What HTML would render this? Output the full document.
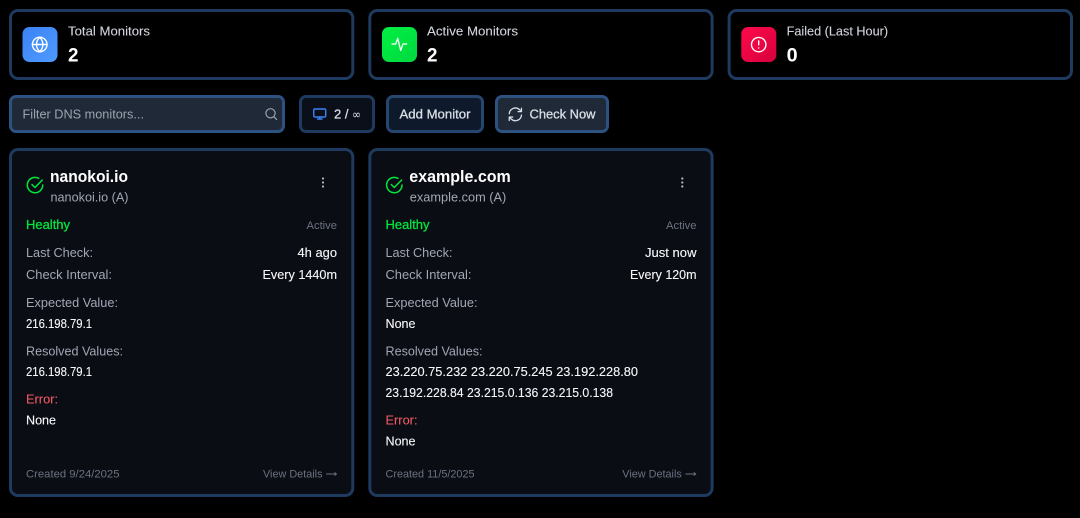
<!DOCTYPE html>
<html lang="en"><head><meta charset="utf-8"><title>DNS Monitors</title>
<style>
html,body{margin:0;padding:0;background:#000;width:1080px;height:518px;overflow:hidden}
svg{display:block}
text{font-family:"Liberation Sans",sans-serif}
.i{fill:none;stroke-linecap:round;stroke-linejoin:round}
.l{font-size:13px;fill:#a1a7b3}
.v{font-size:13px;fill:#f6f7f9;stroke:#f6f7f9;stroke-width:.12px}
.s{font-size:11px;fill:#6b7280}
.h{font-size:16.5px;font-weight:700;fill:#fff}
.n{font-size:19.5px;font-weight:700;fill:#fff}
.t{font-size:13px;fill:#d1d5db;stroke:#d1d5db;stroke-width:.1px}
.b{font-size:13px;fill:#d8dde5;stroke:#d8dde5;stroke-width:.3px}
.g{font-size:13px;fill:#00e63c;stroke:#00e63c;stroke-width:.3px}
.e{font-size:13px;fill:#f05a64;stroke:#f05a64;stroke-width:.1px}
</style></head><body>
<svg width="1080" height="518" viewBox="0 0 1080 518" xmlns="http://www.w3.org/2000/svg">
<defs>
<linearGradient id="gb" x1="0" y1="0" x2="1" y2="1"><stop offset="0" stop-color="#3b82f6"/><stop offset="1" stop-color="#4f9bff"/></linearGradient>
<linearGradient id="gg" x1="0" y1="0" x2="1" y2="1"><stop offset="0" stop-color="#00f044"/><stop offset="1" stop-color="#00d93e"/></linearGradient>
<linearGradient id="gr" x1="0" y1="0" x2="1" y2="1"><stop offset="0" stop-color="#ff0a4a"/><stop offset="1" stop-color="#d6003c"/></linearGradient>
</defs>
<rect width="1080" height="518" fill="#000"/>

<!-- stat cards -->
<rect x="10.5" y="10.5" width="342.3" height="68" rx="7.5" fill="#000" stroke="#1e3a5f" stroke-width="3"/>
<rect x="369.8" y="10.5" width="342.3" height="68" rx="7.5" fill="#000" stroke="#1e3a5f" stroke-width="3"/>
<rect x="729.1" y="10.5" width="342.4" height="68" rx="7.5" fill="#000" stroke="#1e3a5f" stroke-width="3"/>

<rect x="22.5" y="27" width="35" height="35" rx="7" fill="url(#gb)"/>
<g class="i" stroke="#fff" stroke-width="1.4">
<circle cx="39.7" cy="44.5" r="7.3"/>
<path d="M32.4 44.5h14.6M39.7 37.2c-4.3 4.3-4.3 10.3 0 14.6M39.7 37.2c4.3 4.3 4.3 10.3 0 14.6"/>
</g>
<text class="t" x="68" y="35.5" textLength="82" lengthAdjust="spacingAndGlyphs">Total Monitors</text>
<text class="n" x="68" y="61.5" textLength="10.5" lengthAdjust="spacingAndGlyphs">2</text>

<rect x="382" y="27" width="35" height="35" rx="7" fill="url(#gg)"/>
<path class="i" stroke="#fff" stroke-width="1.3" d="M392 44h3.7l2-5.7 3 12.2 2.3-6.5h3.7"/>
<text class="t" x="427" y="35.5" textLength="91" lengthAdjust="spacingAndGlyphs">Active Monitors</text>
<text class="n" x="427" y="61.5" textLength="10.5" lengthAdjust="spacingAndGlyphs">2</text>

<rect x="741.3" y="27" width="35" height="35" rx="7" fill="url(#gr)"/>
<g class="i" stroke="#fff" stroke-width="1.4"><circle cx="758.7" cy="44.6" r="7.2"/><path d="M758.7 41v3.8M758.7 48h.01"/></g>
<text class="t" x="786.6" y="35.5" textLength="101.5" lengthAdjust="spacingAndGlyphs">Failed (Last Hour)</text>
<text class="n" x="786.6" y="61.5" textLength="11" lengthAdjust="spacingAndGlyphs">0</text>

<!-- toolbar -->
<rect x="10.5" y="96.5" width="273" height="35" rx="5.5" fill="#1f2937" stroke="#2c5282" stroke-width="3"/>
<text x="22.5" y="118.5" font-size="13" fill="#9ca3af" textLength="121.5" lengthAdjust="spacingAndGlyphs">Filter DNS monitors...</text>
<g class="i" stroke="#9ca3af" stroke-width="1.2"><circle cx="270.5" cy="113.3" r="4.6"/><path d="M274 116.8l2.6 2.6"/></g>

<rect x="300.5" y="96.5" width="73" height="35" rx="5.5" fill="#0a0f1a" stroke="#1e3a5f" stroke-width="3"/>
<g class="i" stroke="#3b82f6" stroke-width="1.4"><rect x="313.7" y="109" width="12" height="8" rx="1.2"/><path d="M317.5 119h4.5M319.7 117v2"/></g>
<text class="b" x="334" y="118.5">2 /</text>
<text x="352" y="118.5" font-size="12" fill="#d8dde5" style="font-family:'DejaVu Sans',sans-serif" textLength="9" lengthAdjust="spacingAndGlyphs">∞</text>

<rect x="387.5" y="96.5" width="95" height="35" rx="5.5" fill="#0e1a2b" stroke="#25466f" stroke-width="3"/>
<text class="b" x="399.5" y="118.5" textLength="71" lengthAdjust="spacingAndGlyphs">Add Monitor</text>

<rect x="496.5" y="96.5" width="111" height="35" rx="5.5" fill="#1f2937" stroke="#2c5282" stroke-width="3"/>
<g class="i" stroke="#d8dde5" stroke-width="1.9" transform="translate(507.2,106.2) scale(.68)">
<path d="M3 11a9 9 0 0 1 15-6l3 3M21 3v5h-5M21 13a9 9 0 0 1-15 6l-3-3M3 21v-5h5"/>
</g>
<text class="b" x="529.5" y="118.5" textLength="66" lengthAdjust="spacingAndGlyphs">Check Now</text>

<!-- card 1 -->
<rect x="10.5" y="149.5" width="342.3" height="346" rx="7.5" fill="#0a0d14" stroke="#1e3a5f" stroke-width="3"/>
<g class="i" stroke="#00e63c" stroke-width="1.5"><path d="M42.7 185a7.7 7.7 0 1 1-4-6.7"/><path d="M32 184.5l3 3 7.3-7.5"/></g>
<text class="h" x="50" y="182" textLength="78" lengthAdjust="spacingAndGlyphs">nanokoi.io</text>
<text class="l" x="50.5" y="201.5" textLength="78" lengthAdjust="spacingAndGlyphs">nanokoi.io (A)</text>
<g fill="#b4bac4"><circle cx="323" cy="178.5" r="1.1"/><circle cx="323" cy="182.5" r="1.1"/><circle cx="323" cy="186.5" r="1.1"/></g>
<text class="g" x="26" y="229" textLength="44" lengthAdjust="spacingAndGlyphs">Healthy</text>
<text class="s" x="306.5" y="229" textLength="30.5" lengthAdjust="spacingAndGlyphs">Active</text>
<text class="l" x="26" y="257" textLength="67" lengthAdjust="spacingAndGlyphs">Last Check:</text>
<text class="v" x="297.5" y="257" textLength="39.5" lengthAdjust="spacingAndGlyphs">4h ago</text>
<text class="l" x="26" y="279" textLength="86" lengthAdjust="spacingAndGlyphs">Check Interval:</text>
<text class="v" x="262.5" y="279" textLength="74.5" lengthAdjust="spacingAndGlyphs">Every 1440m</text>
<text class="l" x="26" y="307" textLength="92" lengthAdjust="spacingAndGlyphs">Expected Value:</text>
<text class="v" x="26" y="328" textLength="66" lengthAdjust="spacingAndGlyphs">216.198.79.1</text>
<text class="l" x="26" y="355.5" textLength="97" lengthAdjust="spacingAndGlyphs">Resolved Values:</text>
<text class="v" x="26" y="376" textLength="66" lengthAdjust="spacingAndGlyphs">216.198.79.1</text>
<text class="e" x="26" y="403.5" textLength="32" lengthAdjust="spacingAndGlyphs">Error:</text>
<text class="v" x="26" y="424.5" textLength="30" lengthAdjust="spacingAndGlyphs">None</text>
<text class="s" x="26" y="477.5" textLength="93.5" lengthAdjust="spacingAndGlyphs">Created 9/24/2025</text>
<text class="s" x="263" y="477.5" textLength="59.5" lengthAdjust="spacingAndGlyphs">View Details</text>
<path class="i" stroke="#6b7280" stroke-width=".9" d="M326.5 474h10M334.7 472.6l1.8 1.4-1.8 1.4"/>

<!-- card 2 -->
<rect x="369.8" y="149.5" width="342.3" height="346" rx="7.5" fill="#0a0d14" stroke="#1e3a5f" stroke-width="3"/>
<g class="i" stroke="#00e63c" stroke-width="1.5"><path d="M402 185a7.7 7.7 0 1 1-4-6.7"/><path d="M391.3 184.5l3 3 7.3-7.5"/></g>
<text class="h" x="409.3" y="182" textLength="101.5" lengthAdjust="spacingAndGlyphs">example.com</text>
<text class="l" x="409.8" y="201.5" textLength="96.5" lengthAdjust="spacingAndGlyphs">example.com (A)</text>
<g fill="#b4bac4"><circle cx="682.3" cy="178.5" r="1.1"/><circle cx="682.3" cy="182.5" r="1.1"/><circle cx="682.3" cy="186.5" r="1.1"/></g>
<text class="g" x="385.5" y="229" textLength="44" lengthAdjust="spacingAndGlyphs">Healthy</text>
<text class="s" x="666" y="229" textLength="30.5" lengthAdjust="spacingAndGlyphs">Active</text>
<text class="l" x="385.5" y="257" textLength="67" lengthAdjust="spacingAndGlyphs">Last Check:</text>
<text class="v" x="645" y="257" textLength="51.5" lengthAdjust="spacingAndGlyphs">Just now</text>
<text class="l" x="385.5" y="279" textLength="86" lengthAdjust="spacingAndGlyphs">Check Interval:</text>
<text class="v" x="630" y="279" textLength="66.5" lengthAdjust="spacingAndGlyphs">Every 120m</text>
<text class="l" x="385.5" y="307" textLength="92" lengthAdjust="spacingAndGlyphs">Expected Value:</text>
<text class="v" x="385.5" y="328" textLength="30" lengthAdjust="spacingAndGlyphs">None</text>
<text class="l" x="385.5" y="355.5" textLength="97" lengthAdjust="spacingAndGlyphs">Resolved Values:</text>
<text class="v" x="385.5" y="376" textLength="252.5" lengthAdjust="spacingAndGlyphs">23.220.75.232 23.220.75.245 23.192.228.80</text>
<text class="v" x="385.5" y="397" textLength="227.5" lengthAdjust="spacingAndGlyphs">23.192.228.84 23.215.0.136 23.215.0.138</text>
<text class="e" x="385.5" y="424.5" textLength="32" lengthAdjust="spacingAndGlyphs">Error:</text>
<text class="v" x="385.5" y="445.5" textLength="30" lengthAdjust="spacingAndGlyphs">None</text>
<text class="s" x="385.5" y="477.5" textLength="89" lengthAdjust="spacingAndGlyphs">Created 11/5/2025</text>
<text class="s" x="622.3" y="477.5" textLength="59.5" lengthAdjust="spacingAndGlyphs">View Details</text>
<path class="i" stroke="#6b7280" stroke-width=".9" d="M685.8 474h10M694 472.6l1.8 1.4-1.8 1.4"/>
</svg>
</body></html>
